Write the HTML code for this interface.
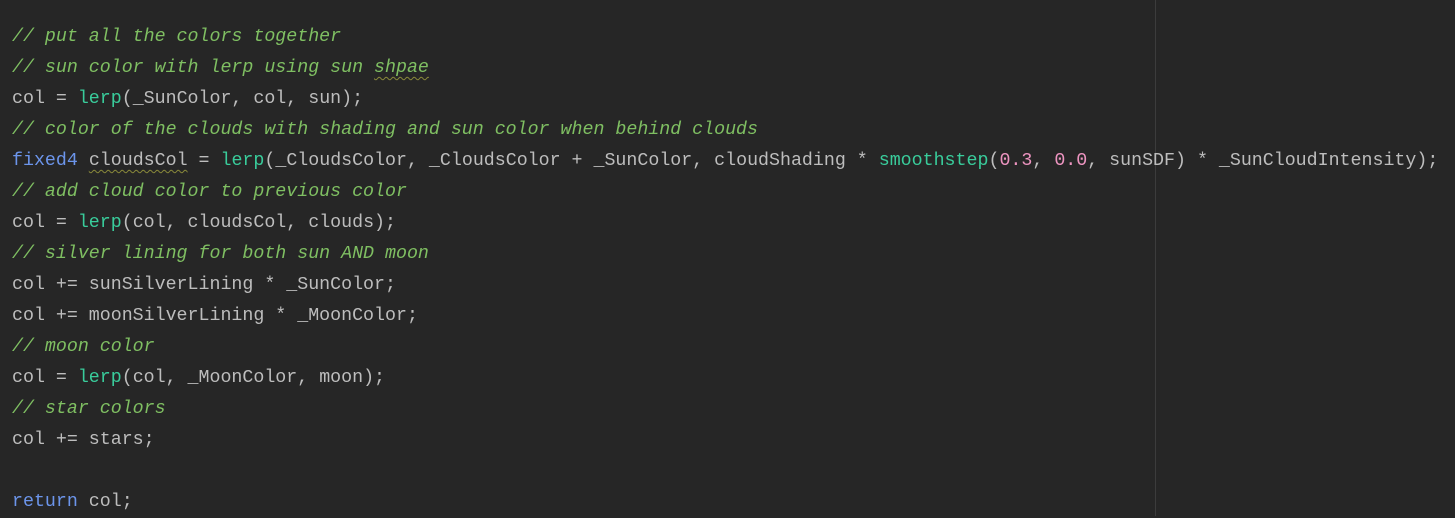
<!DOCTYPE html>
<html><head><style>
html,body{margin:0;padding:0;}
body{width:1455px;height:516px;background:#262626;overflow:hidden;position:relative;}
.g{position:absolute;left:1155px;top:0;width:1px;height:516px;background:#3c3c3c;}
pre{margin:0;position:absolute;left:12px;top:22px;font-family:"Liberation Mono",monospace;font-size:18.3px;line-height:31px;color:#bdbdbd;}
.c{color:#7fbf62;font-style:italic;}
.f{color:#39cc9b;}
.k{color:#6c95eb;}
.n{color:#ed94c0;}
.w{text-decoration:underline wavy #8a8a3a;text-decoration-thickness:1px;text-underline-offset:4px;}
</style></head><body>
<div class="g"></div>
<pre><span class="c">// put all the colors together</span>
<span class="c">// sun color with lerp using sun <span class="w">shpae</span></span>
col = <span class="f">lerp</span>(_SunColor, col, sun);
<span class="c">// color of the clouds with shading and sun color when behind clouds</span>
<span class="k">fixed4</span> <span class="w">cloudsCol</span> = <span class="f">lerp</span>(_CloudsColor, _CloudsColor + _SunColor, cloudShading * <span class="f">smoothstep</span>(<span class="n">0.3</span>, <span class="n">0.0</span>, sunSDF) * _SunCloudIntensity);
<span class="c">// add cloud color to previous color</span>
col = <span class="f">lerp</span>(col, cloudsCol, clouds);
<span class="c">// silver lining for both sun AND moon</span>
col += sunSilverLining * _SunColor;
col += moonSilverLining * _MoonColor;
<span class="c">// moon color</span>
col = <span class="f">lerp</span>(col, _MoonColor, moon);
<span class="c">// star colors</span>
col += stars;

<span class="k">return</span> col;</pre>
</body></html>
